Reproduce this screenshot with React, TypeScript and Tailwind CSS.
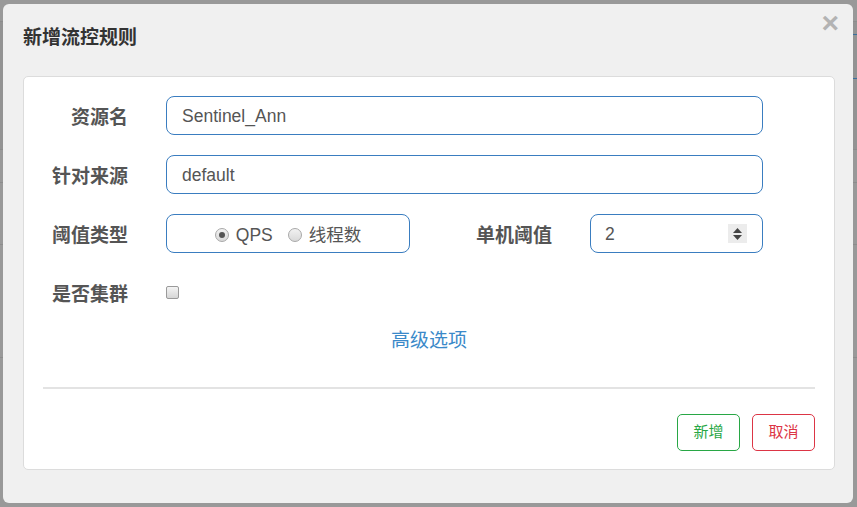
import React, { useState } from 'react';

const cjk = { fontFamily: '"Liberation Sans", "Noto Sans CJK SC", sans-serif' };

function Backdrop() {
  // faint table rows of the page behind the modal
  return (
    <div className="absolute inset-0 bg-[#999999]">
      <div className="h-[22px] border-b border-[#8c8c8c]"></div>
      <div className="h-[128px] bg-[#939393] border-b border-[#8c8c8c]"></div>
      <div className="h-[33px] border-b border-[#8c8c8c]"></div>
      <div className="h-[62px] border-b border-[#8c8c8c]"></div>
      <div className="h-[113px] border-b border-[#8c8c8c]"></div>
      <div className="absolute right-0 top-[34px] w-[6px] h-[45px] border-y border-[#3a6f9e]"></div>
    </div>
  );
}

function FieldLabel({ children, className = '' }: { children: React.ReactNode; className?: string }) {
  return (
    <label className={`shrink-0 pt-[5px] text-right text-[19px] font-bold text-[#555] ${className}`}>{children}</label>
  );
}

export default function App() {
  const [grade, setGrade] = useState<'qps' | 'thread'>('qps');
  const [count, setCount] = useState('2');
  const [cluster, setCluster] = useState(false);

  return (
    <div className="relative w-[857px] h-[507px] overflow-hidden" style={cjk}>
      <Backdrop />

      {/* Modal */}
      <div className="absolute left-[3px] top-[4px] w-[850px] h-[499px] bg-[#f0f0f0] rounded-[6px] flex flex-col">
        <div className="relative h-[72px] flex items-center pl-[20px] pb-[4px]">
          <h3 className="text-[19px] font-bold text-[#333]">新增流控规则</h3>
          <button className="absolute right-[14px] top-[4px] text-[30px] font-bold leading-none text-[#b3b3b3]">×</button>
        </div>

        <div className="ml-[20px] mr-[18px] h-[394px] bg-white border border-[#dcdcdc] rounded-[5px] px-[19px] pt-[19px] flex flex-col">
          <div className="flex items-center h-[39px]">
            <FieldLabel className="w-[85px]">资源名</FieldLabel>
            <input
              defaultValue="Sentinel_Ann"
              className="ml-[38px] w-[597px] h-[39px] px-[15px] pt-[2px] text-[17.5px] text-[#555] border border-[#3a7dc0] rounded-[8px] outline-none"
            />
          </div>

          <div className="flex items-center h-[39px] mt-[20px]">
            <FieldLabel className="w-[85px]">针对来源</FieldLabel>
            <input
              defaultValue="default"
              className="ml-[38px] w-[597px] h-[39px] px-[15px] pt-[2px] text-[17.5px] text-[#555] border border-[#3a7dc0] rounded-[8px] outline-none"
            />
          </div>

          <div className="flex items-center h-[39px] mt-[20px]">
            <FieldLabel className="w-[85px]">阈值类型</FieldLabel>
            <div className="ml-[38px] w-[244px] h-[39px] pt-[3px] border border-[#3a7dc0] rounded-[8px] flex items-center justify-center gap-[15px] text-[17.5px] text-[#555]">
              <label className="flex items-center gap-[7px] cursor-pointer" onClick={() => setGrade('qps')}>
                <span className="w-[14px] h-[14px] rounded-full border border-[#a8a8a8] bg-gradient-to-b from-[#f2f2f2] to-[#d9d9d9] flex items-center justify-center">
                  {grade === 'qps' && <span className="w-[6px] h-[6px] rounded-full bg-[#555]"></span>}
                </span>
                QPS
              </label>
              <label className="flex items-center gap-[7px] cursor-pointer" onClick={() => setGrade('thread')}>
                <span className="w-[14px] h-[14px] rounded-full border border-[#a8a8a8] bg-gradient-to-b from-[#f2f2f2] to-[#d9d9d9] flex items-center justify-center">
                  {grade === 'thread' && <span className="w-[6px] h-[6px] rounded-full bg-[#555]"></span>}
                </span>
                线程数
              </label>
            </div>
            <FieldLabel className="w-[142px]">单机阈值</FieldLabel>
            <div className="ml-[38px] w-[173px] h-[39px] border border-[#3a7dc0] rounded-[8px] flex items-center pl-[14px] pr-[15px]">
              <input
                value={count}
                onChange={(e) => setCount(e.target.value)}
                className="flex-1 min-w-0 pt-[2px] text-[17.5px] text-[#555] outline-none bg-transparent"
              />
              <div className="w-[19px] h-[19px] bg-[#ececec] flex flex-col items-center justify-center gap-[2px]">
                <svg width="9" height="5" viewBox="0 0 9 5"><path d="M0 5 L4.5 0 L9 5 Z" fill="#444" /></svg>
                <svg width="9" height="5" viewBox="0 0 9 5"><path d="M0 0 L4.5 5 L9 0 Z" fill="#444" /></svg>
              </div>
            </div>
          </div>

          <div className="flex items-center h-[39px] mt-[20px]">
            <FieldLabel className="w-[85px]">是否集群</FieldLabel>
            <span
              onClick={() => setCluster(!cluster)}
              className="ml-[38px] w-[13px] h-[13px] rounded-[2px] border border-[#9a9a9a] bg-gradient-to-b from-[#f4f4f4] to-[#d6d6d6] cursor-pointer"
            ></span>
          </div>

          <div className="h-[20px] mt-[19px] flex justify-center">
            <a className="text-[19px] leading-[20px] text-[#3a89c9] cursor-pointer">高级选项</a>
          </div>

          <div className="mt-[36px] h-[2px] bg-[#e3e3e3]"></div>

          <div className="mt-[25px] flex justify-end gap-[12px]">
            <button className="w-[63px] h-[37px] border border-[#28a745] rounded-[5px] text-[15px] text-[#28a745] bg-white">新增</button>
            <button className="w-[63px] h-[37px] border border-[#dc3545] rounded-[5px] text-[15px] text-[#dc3545] bg-white">取消</button>
          </div>
        </div>
      </div>
    </div>
  );
}
